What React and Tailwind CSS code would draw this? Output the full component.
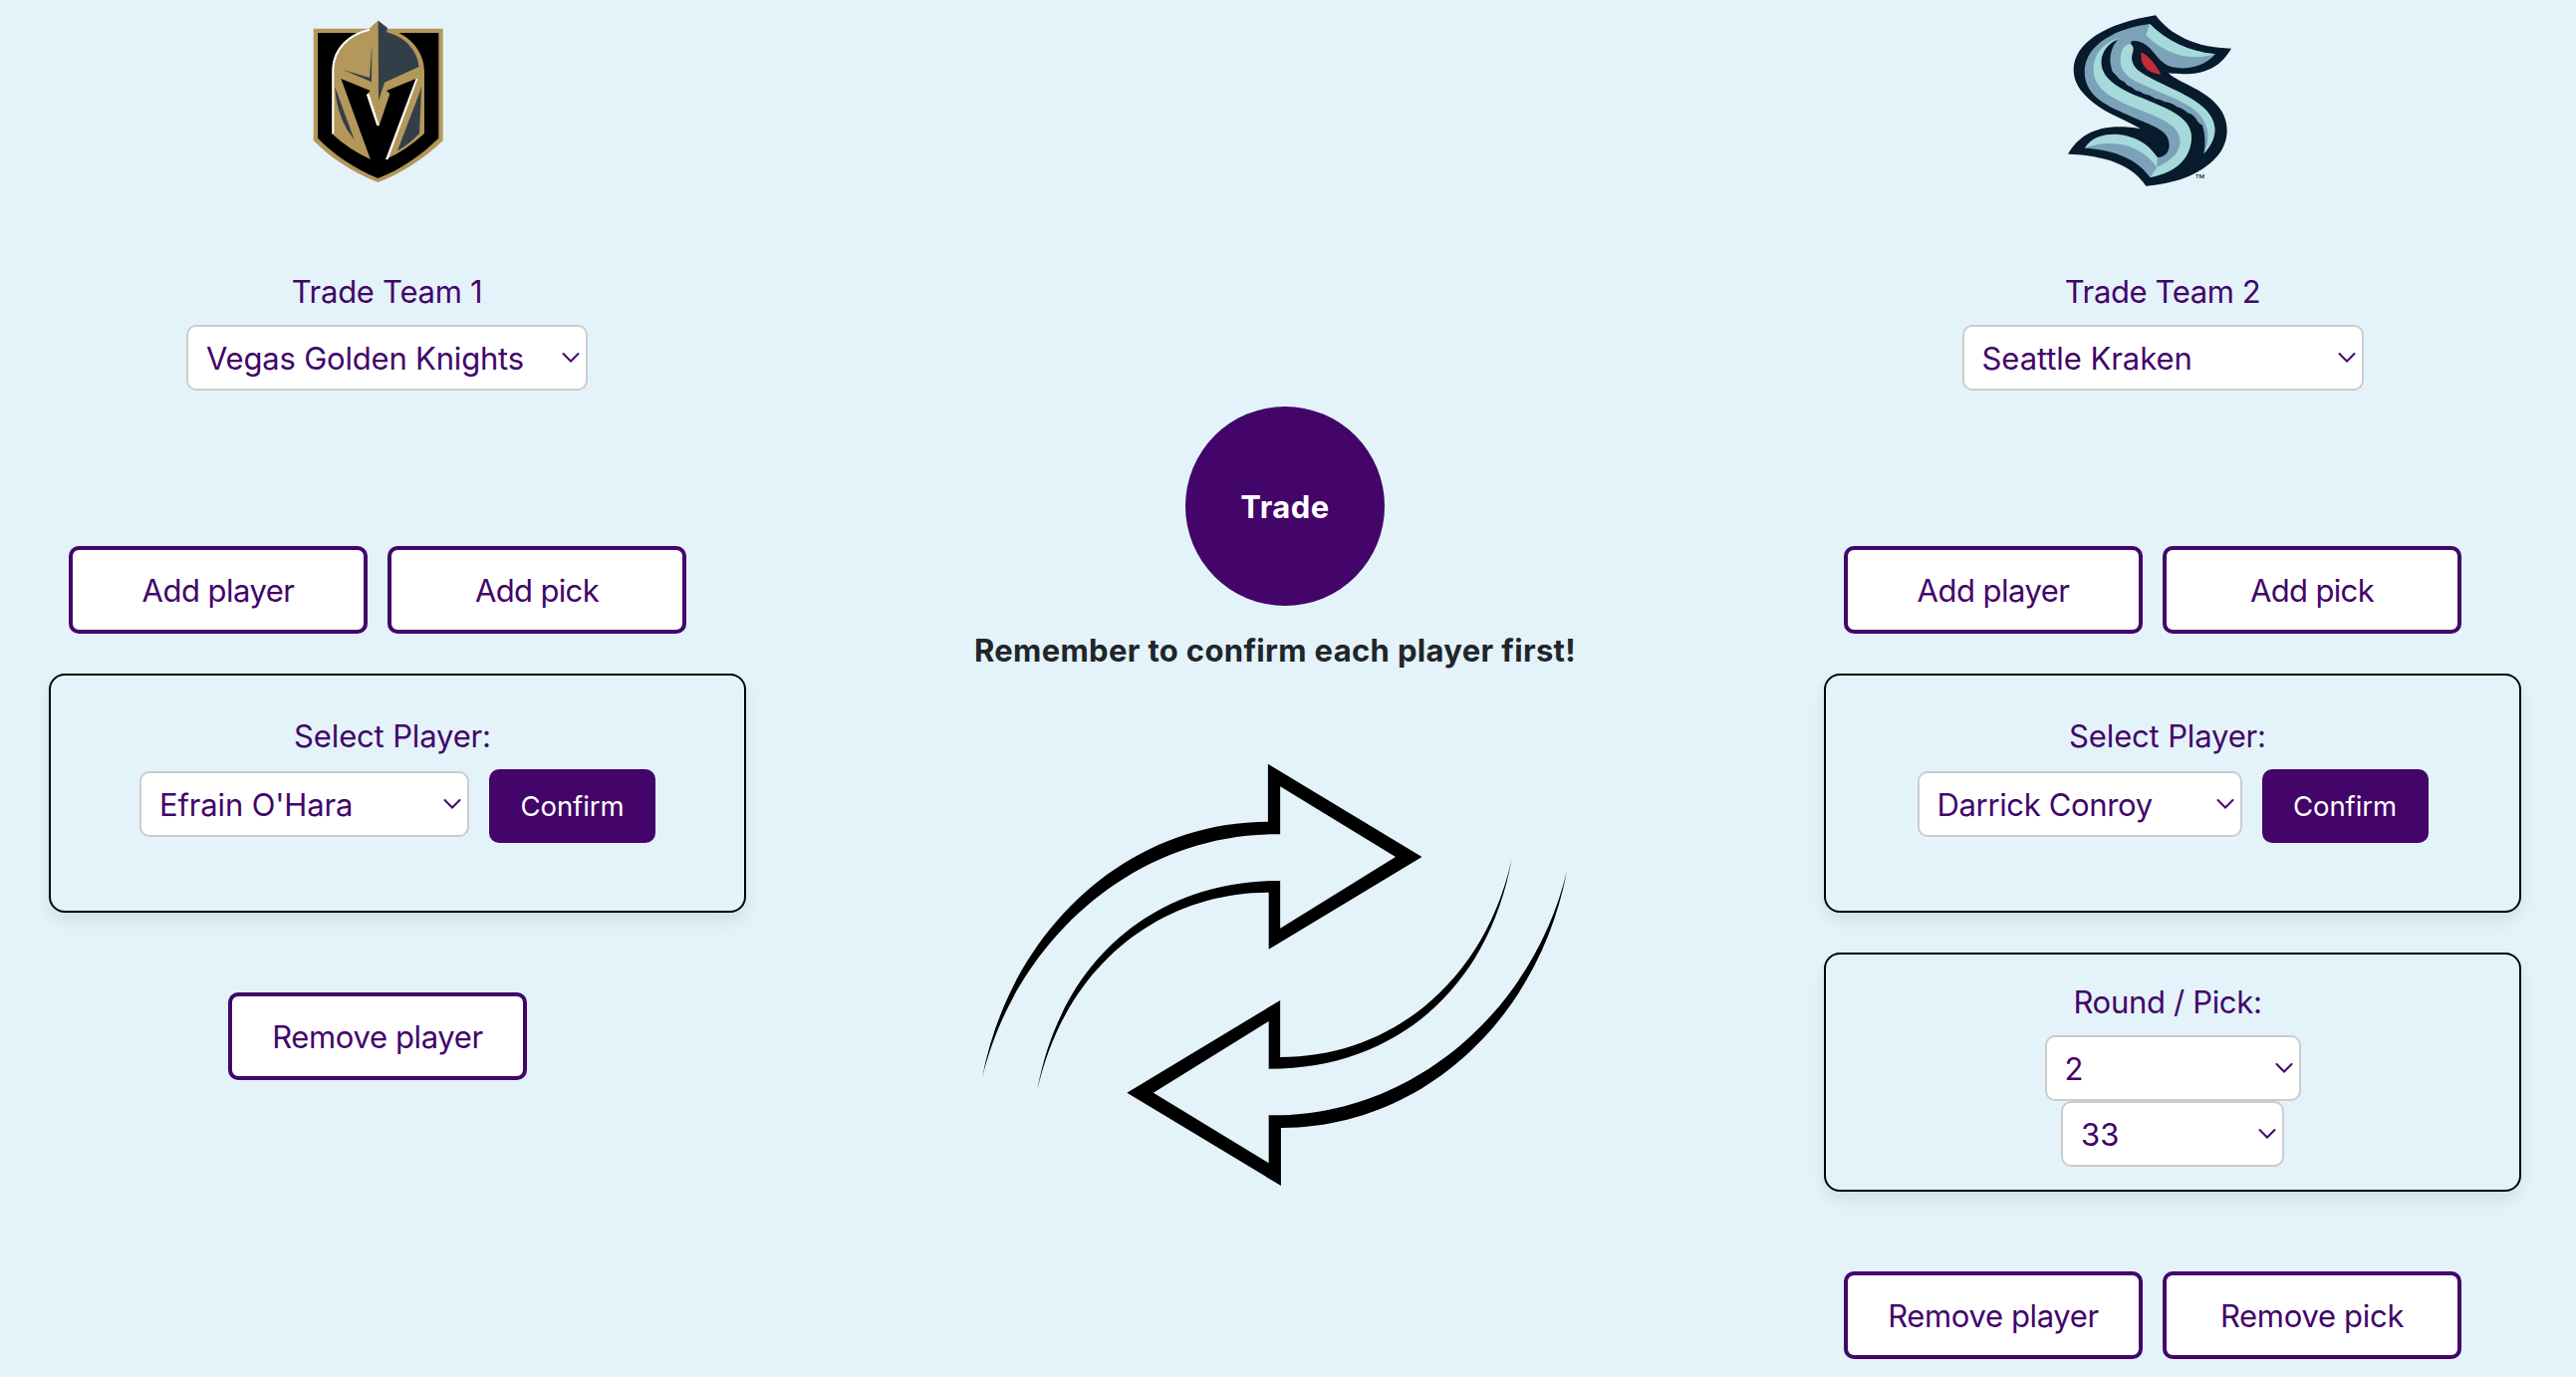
import React from "react";

function KnightsLogo() {
  return (
    <svg className="block h-[200px] w-[180px]" viewBox="-3 0 540 600" aria-label="Vegas Golden Knights">
      <path fill="#b4975a" d="M74 86H464V423C410 475 345 520 268 549C190 518 125 475 74 423Z" />
      <path fill="#000" d="M87 99H451V416C400 465 340 509 268 537C195 506 135 465 87 416Z" />
      <path fill="#b4975a" d="M242 86L268 62L297 86C365 104 408 155 408 215V402Q350 455 291 480H246Q180 450 130 403V210C132 145 180 100 242 86Z" />
      <path fill="#000" d="M157 237L245 273L234 285L266 378H272L304 283L294 273L390 234L293 481H246Z" />
      <path fill="#333f48" d="M269 62L297 84L294 97C345 110 385 145 392 201L288 248L270 303Z" />
      <path fill="#333f48" d="M250 135L249 247L163 210L243 234Z" />
      <path fill="#333f48" d="M138 260L197 420L176 392Q143 335 138 260Z" />
      <path fill="#333f48" d="M399 262L393 402Q358 438 327 454L373 333Q390 292 399 262Z" />
      <path fill="none" stroke="#fff" strokeWidth="6" d="M243 89C182 103 134 147 133 210V403" />
      <path fill="#fff" d="M234 285L241 281L272 378H265Z" />
      <path fill="#fff" d="M382 238L390 234L299 479L291 481Z" />
    </svg>
  );
}

function KrakenLogo() {
  return (
    <svg className="block h-[200px] w-[210px]" viewBox="18 0 630 600" aria-label="Seattle Kraken">
      <path fill="#071b2c" d="M342 46C385 105 465 145 570 146C535 205 485 232 380 220C400 238 430 250 460 266C530 303 558 345 557 395C555 450 520 490 460 522C420 543 370 555 313 560C270 495 190 468 78 464C115 400 180 368 297 388C240 355 200 345 155 310C112 275 95 245 95 210C96 130 190 70 342 46Z" />
      <path fill="#7ba2b9" d="M324 72C230 84 130 130 128 215C128 300 215 325 290 360C350 385 383 398 383 437C382 462 368 472 348 474L325 534C410 520 450 470 450 412C448 350 370 325 300 295C225 265 178 235 178 185C180 150 200 128 235 118Z" />
      <path fill="#a5d9da" d="M238 110C175 132 155 170 155 210C156 265 200 290 260 317C340 350 415 370 416 425C414 470 375 488 345 504L325 534C410 520 450 470 450 412C448 350 370 325 300 295C225 265 178 235 178 185C180 155 198 130 238 110Z" />
      <path fill="#7ba2b9" d="M324 72C375 122 440 155 522 163C490 200 435 212 392 202C340 188 335 128 280 123C268 122 262 126 275 145C265 165 265 190 290 213C340 250 440 280 487 325C535 370 528 420 487 463C494 430 490 400 482 376Q470 372 464 358Q452 342 438 340Q424 326 406 322Q390 308 370 307Q356 298 340 296Q324 285 307 283Q296 274 282 272Q270 260 258 257Q246 243 234 239Q222 225 212 216C200 180 202 145 235 112Z" />
      <path fill="#a5d9da" d="M262 132C275 134 277 146 273 158C265 180 275 202 292 214C340 250 440 280 487 325C535 370 528 420 487 463C503 428 505 392 485 360C450 305 360 285 300 253C250 232 236 208 236 180C236 155 244 138 262 132Z" />
      <path fill="#a5d9da" d="M324 72C375 122 440 155 522 163C440 188 365 158 313 106Z" />
      <path fill="#a5d9da" d="M128 446C150 410 190 403 225 404C290 410 325 440 348 474L345 504C295 440 230 418 128 446Z" />
      <path fill="#7ba2b9" d="M128 446C220 414 300 440 345 504L325 534C290 482 220 450 128 446Z" />
      <path fill="#c12c38" d="M299 157C325 170 345 200 358 224C322 222 293 200 299 157Z" />
      <text x="459" y="547" fontSize="32" fontFamily="Liberation Sans, sans-serif" fill="#071b2c">™</text>
    </svg>
  );
}

function SwapArrows() {
  const arrow =
    "M766 50L1157 330L768 608V437C490 437 250 660 180 1034C240 640 480 400 797 402V545L1090 330L797 118V262C430 255 125 580 40 997C110 560 400 225 766 224Z";
  return (
    <svg className="mt-[73px] block h-[450px] w-[620px]" viewBox="0 0 1568 1350" preserveAspectRatio="none">
      <path d={arrow} />
      <path d={arrow} transform="rotate(180 782.5 685)" />
    </svg>
  );
}

function Select({ value, className = "" }) {
  return (
    <div className={`relative h-[66px] shrink-0 ${className}`}>
      <select
        defaultValue={value}
        className="block h-full w-full appearance-none rounded-[10px] border-2 border-[#ccc] bg-white pt-0.5 pl-[18px] text-[31px]"
      >
        <option>{value}</option>
      </select>
      <svg
        className="pointer-events-none absolute top-[27px] right-2 h-3 w-[18px]"
        viewBox="0 0 18 12"
        fill="none"
        stroke="currentColor"
        strokeWidth="2"
        strokeLinecap="round"
      >
        <path d="M1.5 2L9 9.5L16.500 2" />
      </svg>
    </div>
  );
}

function OutlineButton({ children, className }) {
  return (
    <button className={`h-[88px] w-[300px] shrink-0 rounded-[10px] border-4 border-[#43056a] bg-white pt-0.5 text-[31px] ${className}`}>
      {children}
    </button>
  );
}

function Card({ label, labelClass, className, children }) {
  return (
    <section className={`mt-10 h-60 rounded-2xl border-2 border-black shadow-[0_8px_16px_rgba(0,0,0,0.08)] ${className}`}>
      <p className={`pr-2.5 text-center leading-[48px] ${labelClass}`}>{label}</p>
      {children}
    </section>
  );
}

function PlayerCard({ player, selectClass }) {
  return (
    <Card label="Select Player:" labelClass="tracking-[-0.15px]" className="pt-[37px]">
      <div className="mt-[9px] flex items-start justify-center gap-5">
        <Select value={player} className={`mt-0.5 ${selectClass}`} />
        <button className="h-[74px] w-[167px] rounded-[10px] bg-[#43056a] pt-0.5 text-[27.5px] tracking-[-0.1px] text-white">Confirm</button>
      </div>
    </Card>
  );
}

function TeamColumn({ logo, label, labelClass, team, teamClass, children }) {
  return (
    <div className="w-[700px] shrink-0">
      <div className="flex w-[660px] justify-center">{logo}</div>
      <div className="mt-[69px] flex w-[680px] flex-col items-center">
        <p className={`leading-[48px] ${labelClass}`}>{label}</p>
        <Select value={team} className={`mt-[9px] ${teamClass}`} />
      </div>
      <div className="mt-[156px] flex w-[660px] justify-center gap-5">
        <OutlineButton className="tracking-[-0.52px]">Add player</OutlineButton>
        <OutlineButton className="tracking-[-0.65px]">Add pick</OutlineButton>
      </div>
      {children}
    </div>
  );
}

export default function App() {
  return (
    <main className="flex h-[1382px] w-[2586px] overflow-hidden bg-[#e3f3f9] pl-[49px] font-[Inter,sans-serif] text-[31px] text-[#43056a]">
      <TeamColumn
        logo={<KnightsLogo />}
        label="Trade Team 1"
        labelClass="pr-px tracking-[-0.27px]"
        team="Vegas Golden Knights"
        teamClass="mr-px w-[403px] tracking-[-0.2px]"
      >
        <PlayerCard player="Efrain O'Hara" selectClass="w-[331px] tracking-[-0.15px]" />
        <div className="mt-20 flex w-[660px] justify-center">
          <OutlineButton className="tracking-[-0.37px]">Remove player</OutlineButton>
        </div>
      </TeamColumn>

      <div className="flex w-[1082px] shrink-0 flex-col items-center pt-[408px] pr-5">
        <button className="ml-5 size-[200px] rounded-full bg-[#43056a] pt-0.5 font-bold tracking-[0.45px] text-white">Trade</button>
        <p className="mt-[21px] font-bold leading-[48px] tracking-[0.34px] text-[#212529]">Remember to confirm each player first!</p>
        <SwapArrows />
      </div>

      <TeamColumn
        logo={<KrakenLogo />}
        label="Trade Team 2"
        labelClass="tracking-[-0.4px]"
        team="Seattle Kraken"
        teamClass="w-[403px] tracking-[-0.07px]"
      >
        <PlayerCard player="Darrick Conroy" selectClass="w-[326px] tracking-[-0.35px]" />
        <Card label="Round / Pick:" labelClass="tracking-[-0.32px]" className="pt-6">
          <div className="mt-[9px] flex flex-col items-center">
            <Select value="2" className="w-[257px]" />
            <Select value="33" className="w-[224px]" />
          </div>
        </Card>
        <div className="mt-20 flex w-[660px] justify-center gap-5">
          <OutlineButton className="tracking-[-0.37px]">Remove player</OutlineButton>
          <OutlineButton className="tracking-[-0.3px]">Remove pick</OutlineButton>
        </div>
      </TeamColumn>
    </main>
  );
}
